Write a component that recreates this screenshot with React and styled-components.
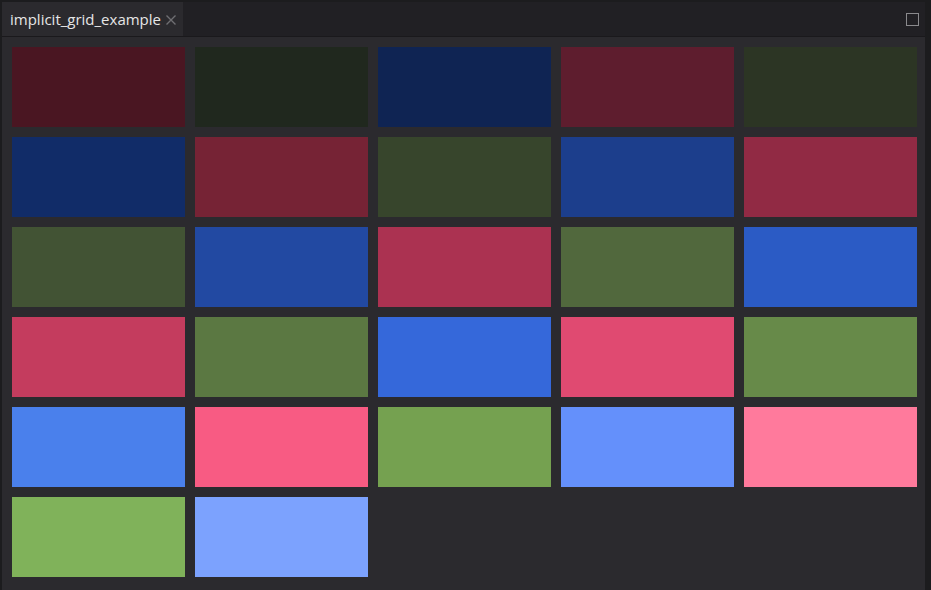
import styled, { createGlobalStyle } from "styled-components";

const GlobalStyle = createGlobalStyle`
  html, body {
    margin: 0;
    padding: 0;
    background: #1c1c1e;
    overflow: hidden;
  }
`;

const colors = [
  "#4a1622", "#20281e", "#0f2453", "#5e1d2e", "#2c3524",
  "#112c68", "#762335", "#37452c", "#1c3e8c", "#912a44",
  "#425334", "#2249a2", "#ab3251", "#51683d", "#2b5bc5",
  "#c43c5e", "#5b7842", "#3568da", "#e04a71", "#678a49",
  "#4a80ec", "#f85b83", "#75a150", "#6490fb", "#ff7a9c",
  "#80b25a", "#7ca2fe",
];

const Window = styled.div`
  margin: 2px 6px 0 2px;
  height: 588px;
  display: flex;
  flex-direction: column;
  background: #2b2a2e;
`;

const TabBar = styled.div`
  display: flex;
  align-items: stretch;
  height: 34px;
  background: #212024;
  border-bottom: 1px solid #1a191c;
`;

const Tab = styled.div`
  display: flex;
  align-items: center;
  gap: 5px;
  padding: 0 0 1px 8px;
  width: 173px;
  background: #2b2a2e;
  font-family: "Open Sans", "Noto Sans", sans-serif;
  font-size: 15px;
  color: #e6e6e6;
`;

const Close = styled.svg`
  width: 10px;
  height: 10px;
  margin-top: 2px;
  stroke: #6f6f72;
  stroke-width: 1.4;
`;

const Spacer = styled.div`
  flex: 1;
`;

const MaxButton = styled.div`
  width: 11px;
  height: 11px;
  margin: 11px 6px 0 0;
  border: 1.5px solid #8a8a8d;
`;

const Grid = styled.div`
  display: grid;
  grid-template-columns: repeat(5, 173px);
  grid-auto-rows: 80px;
  gap: 10px;
  padding: 10px;
`;

const Cell = styled.div`
  background: ${(p) => p.$color};
`;

export default function App() {
  return (
    <>
      <GlobalStyle />
      <Window>
        <TabBar>
          <Tab>
            implicit_grid_example
            <Close viewBox="0 0 10 10">
              <path d="M0.5 0.5 L9.5 9.5 M9.5 0.5 L0.5 9.5" />
            </Close>
          </Tab>
          <Spacer />
          <MaxButton />
        </TabBar>
        <Grid>
          {colors.map((c, i) => (
            <Cell key={i} $color={c} />
          ))}
        </Grid>
      </Window>
    </>
  );
}
